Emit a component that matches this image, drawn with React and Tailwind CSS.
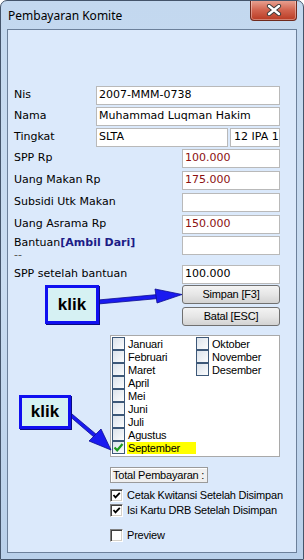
import React from "react";

const LABEL = { fontFamily: '"DejaVu Sans", Verdana, sans-serif' };
const MS = { fontFamily: '"Liberation Sans", Arial, sans-serif' };

function Field({ value, red, className = "" }) {
  return (
    <div
      className={`h-[19px] bg-white border border-[#b9b9b9] pl-[2px] flex items-center text-[11px] whitespace-nowrap overflow-hidden ${red ? "text-[#8c1010]" : "text-black"} ${className}`}
      style={LABEL}
    >
      {value}
    </div>
  );
}

function Row({ label, children, wide = true, className = "" }) {
  return (
    <div className={`flex items-center h-[19px] w-[266px] ${className}`}>
      <div className={`${wide ? "w-[82px]" : "flex-1"} text-[11px] text-black whitespace-nowrap`} style={LABEL}>
        {label}
      </div>
      {children}
    </div>
  );
}

function WinBtn({ children, className = "" }) {
  return (
    <div
      className={`w-[98px] h-[19px] rounded-[3px] border border-[#707070] bg-gradient-to-b from-[#f3f3f3] via-[#e6e6e6] to-[#d3d3d3] flex items-center justify-center text-[11px] text-black tracking-[-0.2px] ${className}`}
      style={MS}
    >
      {children}
    </div>
  );
}

function MonthBox({ checked }) {
  return (
    <div className="w-[13px] h-[13px] shrink-0 border border-[#3d5878] bg-gradient-to-br from-[#dce3eb] to-[#fbfcfd] flex items-center justify-center">
      {checked && (
        <svg width="11" height="11" viewBox="0 0 11 11">
          <path d="M1.5 5.5 L4.2 8.3 L9.5 2" fill="none" stroke="#1e9b1e" strokeWidth="2.2" />
        </svg>
      )}
    </div>
  );
}

function Month({ name, checked, hl }) {
  return (
    <div className="flex items-center h-[13px] gap-[2px]">
      <MonthBox checked={checked} />
      <span
        className={`text-[11px] leading-[12px] tracking-[-0.2px] text-black ${hl ? "bg-[#ffff00] w-[69px] pl-[1px]" : "pl-[1px]"}`}
        style={MS}
      >
        {name}
      </span>
    </div>
  );
}

function ClassicBox({ checked }) {
  return (
    <div className="w-[13px] h-[13px] shrink-0 border border-t-[#808080] border-l-[#808080] border-b-white border-r-white bg-white shadow-[inset_1px_1px_0_#404040,inset_-1px_-1px_0_#d4d0c8] flex items-center justify-center">
      {checked && (
        <svg width="9" height="9" viewBox="0 0 9 9">
          <path d="M1.5 4 L3.5 6.3 L7.8 1.8" fill="none" stroke="#000" strokeWidth="1.8" />
        </svg>
      )}
    </div>
  );
}

function Check({ label, checked, className = "" }) {
  return (
    <div className={`ml-[96px] flex items-center h-[13px] gap-[4px] ${className}`}>
      <ClassicBox checked={checked} />
      <span className="text-[11px] tracking-[-0.2px] text-black" style={MS}>
        {label}
      </span>
    </div>
  );
}

function Klik({ className }) {
  return (
    <div
      className={`absolute border-[3px] border-[#1010f0] bg-[#d6f1f3] shadow-[1px_1px_0_#0a0a80] flex items-center justify-center text-[17px] font-bold text-black ${className}`}
      style={MS}
    >
      klik
    </div>
  );
}

export default function App() {
  const left = ["Januari", "Februari", "Maret", "April", "Mei", "Juni", "Juli", "Agustus"];
  const right = ["Oktober", "November", "Desember"];

  return (
    <div className="w-[304px] h-[560px] overflow-hidden rounded-t-[7px] border border-[#44546a] bg-gradient-to-b from-[#c3d8ef] via-[#c9dcf1] to-[#b9d0ea]">
      {/* title bar */}
      <div className="h-[28px] flex items-start justify-between">
        <div className="pl-[7px] pt-[6px] text-[12px] text-black" style={{ fontFamily: '"Noto Sans", "Open Sans", sans-serif' }}>
          Pembayaran Komite
        </div>
        <div className="-mt-[1px] mr-[6px] w-[47px] h-[21px] rounded-b-[4px] border border-t-0 border-[#6f2a1e] bg-gradient-to-b from-[#e9a596] via-[#d2644f] to-[#b93a22] shadow-[inset_0_0_0_1px_rgba(255,255,255,0.35)] flex items-center justify-center">
          <svg width="16" height="12" viewBox="0 0 16 12">
            <path d="M3 2 L13 10 M13 2 L3 10" stroke="#3a3a3a" strokeWidth="4.2" strokeLinecap="round" />
            <path d="M3 2 L13 10 M13 2 L3 10" stroke="#ffffff" strokeWidth="2.4" strokeLinecap="round" />
          </svg>
        </div>
      </div>

      {/* client area */}
      <div className="relative ml-[6px] w-[290px] h-[524px] border border-[#6c809a] bg-[#dbe9fb]">
        <div className="pl-[6px] pt-[56px] flex flex-col">
          <Row label="Nis">
            <Field value="2007-MMM-0738" className="w-[184px]" />
          </Row>
          <Row label="Nama" className="mt-[2px]">
            <Field value="Muhammad Luqman Hakim" className="w-[184px]" />
          </Row>
          <Row label="Tingkat" className="mt-[2px]">
            <Field value="SLTA" className="w-[132px]" />
            <Field value="12 IPA 1" className="w-[50px] ml-[2px] !pl-[3px]" />
          </Row>
          <Row label="SPP Rp" wide={false} className="mt-[2px]">
            <Field value="100.000" red className="w-[98px]" />
          </Row>
          <Row label="Uang Makan Rp" wide={false} className="mt-[3px]">
            <Field value="175.000" red className="w-[98px]" />
          </Row>
          <Row label="Subsidi Utk Makan" wide={false} className="mt-[3px]">
            <Field value="" className="w-[98px]" />
          </Row>
          <Row label="Uang Asrama Rp" wide={false} className="mt-[3px]">
            <Field value="150.000" red className="w-[98px]" />
          </Row>
          <div className="flex items-start h-[19px] w-[266px] mt-[2px]">
            <div className="flex-1 text-[11px] leading-[12px] pt-[1px] text-black" style={LABEL}>
              <div>
                Bantuan<span className="font-bold text-[#1c1c86]">[Ambil Dari]</span>
              </div>
              <div className="text-[#555]">--</div>
            </div>
            <Field value="" className="w-[98px]" />
          </div>
          <Row label="SPP setelah bantuan" wide={false} className="mt-[10px]">
            <Field value="100.000" className="w-[98px]" />
          </Row>

          <div className="ml-[168px] mt-[1px] flex flex-col gap-[3px]">
            <WinBtn>Simpan [F3]</WinBtn>
            <WinBtn>Batal [ESC]</WinBtn>
          </div>

          {/* months */}
          <div className="ml-[96px] mt-[9px] w-[170px] h-[122px] border border-[#a9a9a9] bg-white pl-[1px] pt-[1px] flex">
            <div className="w-[84px] flex flex-col">
              {left.map((m) => (
                <Month key={m} name={m} />
              ))}
              <Month name="September" checked hl />
            </div>
            <div className="flex flex-col">
              {right.map((m) => (
                <Month key={m} name={m} />
              ))}
            </div>
          </div>

          <div
            className="ml-[96px] mt-[10px] w-[98px] h-[16px] bg-[#efefef] border border-[#9a9a9a] shadow-[inset_1px_1px_0_#ffffff] flex items-center pl-[2px] text-[11px] tracking-[-0.2px] text-black"
            style={MS}
          >
            Total Pembayaran :
          </div>

          <Check label="Cetak Kwitansi Setelah Disimpan" checked className="mt-[6px]" />
          <Check label="Isi Kartu DRB Setelah Disimpan" checked className="mt-[2px]" />
          <Check label="Preview" className="mt-[12px]" />
        </div>

        {/* annotations */}
        <svg className="absolute left-0 top-0 pointer-events-none" width="290" height="524">
          <g fill="#1a1af0" stroke="#0c0c90" strokeWidth="0.8">
            <polygon points="90,270 150,264.5 150.5,268.5 90,274" />
            <polygon points="174,264.5 147,259 149,273" />
            <polygon points="61,381.5 89,405 86.5,407.5 59,384" />
            <polygon points="103,420 81,411 93,399" />
          </g>
        </svg>
        <Klik className="left-[37px] top-[255px] w-[54px] h-[39px]" />
        <Klik className="left-[11px] top-[365px] w-[52px] h-[34px]" />
      </div>
    </div>
  );
}
